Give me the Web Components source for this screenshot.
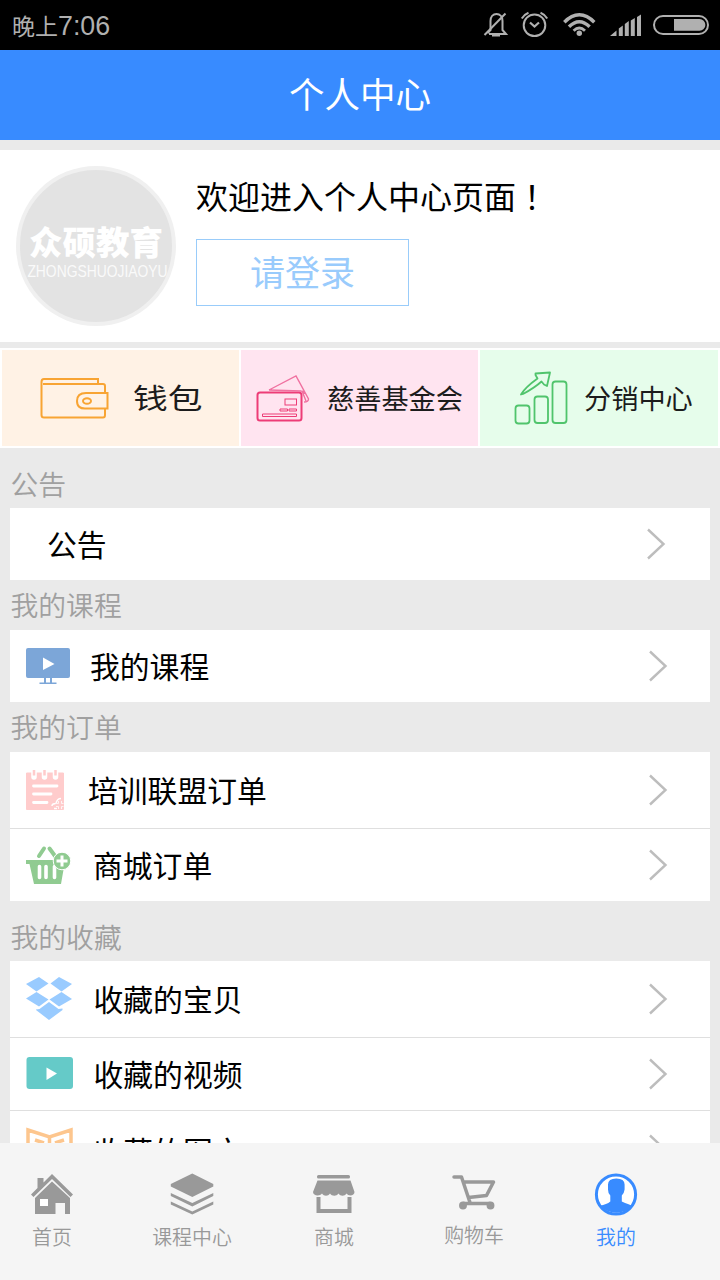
<!DOCTYPE html>
<html lang="zh-CN">
<head>
<meta charset="utf-8">
<title>个人中心</title>
<style>
html,body{margin:0;padding:0}
body{width:720px;height:1280px;overflow:hidden;background:#eaeaea;font-family:"Noto Sans CJK SC",sans-serif}
</style>
</head>
<body>
<user-center></user-center>
<script>
const define = (name, html, setup) => {
  const template = document.createElement('template');
  template.innerHTML = html;
  customElements.define(name, class extends HTMLElement {
    constructor() {
      super();
      this.attachShadow({mode: 'open'}).append(template.content.cloneNode(true));
    }
    connectedCallback() { if (setup) setup(this, this.shadowRoot); }
  });
};

define('status-bar', `
<style>
:host{display:flex;height:50px;flex:none;background:#000;color:#b0b0b0;align-items:center;justify-content:space-between;box-sizing:border-box;padding-left:12px}
.time{display:flex;align-items:baseline;font:26.800px/48px "Liberation Sans",sans-serif;white-space:nowrap}
.time b{font:400 23px/48px "Noto Sans CJK SC",sans-serif}
svg{display:block}
</style>
<div class="time"><b>晚上</b><span>7:06</span></div>
<svg width="240" height="50" viewBox="480 0 240 50" fill="none" stroke="#b0b0b0" stroke-width="2">
  <path d="M488.500 33.500V32l2-2V21c0-4 2.500-7 6-7s6 3 6 7v9l3.500 4H489"/><path d="M484.500 35L505.500 13.500"/><path d="M492 35.500h8" stroke-width="2"/>
  <circle cx="534.500" cy="25.300" r="10.800"/><path d="M530 22.500l4.500 4 4.500-4" stroke-width="2.200"/><path d="M521.800 18.500Q524 14.500 528.500 12.700M540.500 12.700Q545 14.500 547.200 18.500"/>
  <g stroke-width="3.400"><path d="M564.300 22.300Q571.500 14.800 579.300 14.800T594.300 22.300"/><path d="M569 26.800Q574 21.700 579.300 21.700T589.600 26.800"/><path d="M573.600 30.800Q576.500 28 579.300 28T585 30.800" stroke-width="2.800"/></g>
  <g fill="#b0b0b0" stroke="none"><circle cx="579.300" cy="33.300" r="2.700"/>
  <path d="M610 36l6.500-5.500V36zM618.800 28.500l4-3V36h-4zM624.800 24l4-3V36h-4zM630.800 20.500l4-2.500V36h-4zM637 17l4-2.500V36h-4z"/>
  <path d="M674 19h25.500a5.900 5.900 0 0 1 0 11.800H674z"/></g>
  <rect x="654" y="16" width="54" height="18" rx="9"/>
</svg>`);

define('title-bar', `
<style>:host{display:block;height:90px;flex:none;background:#388bff;color:#fff;text-align:center;font-size:35.500px;line-height:86px;font-weight:400}</style>
<slot></slot>`);

define('profile-card', `
<style>
:host{display:flex;height:192px;margin-top:10px;background:#fff;box-sizing:border-box;padding:16px 0 0 16px}
.avatar{width:160px;height:160px;box-sizing:border-box;border:4px solid #f0f0f0;border-radius:50%;background:#e3e3e3;color:#fff;display:flex;flex-direction:column;align-items:center;flex:none;padding-top:51px}
.cn{font-weight:900;font-size:33.500px;line-height:40px;height:42px;white-space:nowrap}
.en{font:17px/18px "Liberation Sans",sans-serif;white-space:nowrap;color:#fafafa;transform:translateX(1.500px) scaleX(.815)}
.side{padding-left:20px;display:flex;flex-direction:column;align-items:flex-start}
.welcome{font-size:32px;line-height:47px;height:73px;padding-top:6px;box-sizing:border-box;color:#000;white-space:nowrap}
.mark{font-family:"Noto Sans CJK TC",sans-serif}
button{all:unset;box-sizing:border-box;width:213px;height:67px;border:1px solid #99ccfa;text-align:center;color:#99cbfc;font-size:35px;line-height:61px;padding-bottom:4px;font-weight:400}
</style>
<div class="avatar"><span class="cn">众硕教育</span><span class="en">ZHONGSHUOJIAOYU</span></div>
<div class="side"><div class="welcome">欢迎进入个人中心页面<span class="mark" lang="zh-TW">！</span></div><button>请登录</button></div>`);

define('shortcut-tile', `
<style>
:host{display:flex;align-items:center;background:var(--tile);box-sizing:border-box;height:96px;overflow:hidden;font-size:28px;color:#1c1c1c;font-weight:400}
.text{white-space:nowrap;line-height:40px;margin-top:-3px;transform-origin:0 50%}
::slotted(svg){display:block;flex:none}
</style>
<slot name="icon"></slot><span class="text"><slot></slot></span>`, (el, root) => {
  const t = root.querySelector('.text');
  t.style.fontSize = (el.getAttribute('size') || 27.2) + 'px';
  t.style.transform = 'scaleX(' + (el.getAttribute('stretch') || 1) + ')';
});

define('menu-section', `
<style>
:host{display:block;padding:0 10px}
.label{height:var(--label-height,50px);line-height:var(--label-line,48px);font-size:27.800px;color:#a0a0a0;font-weight:350;white-space:nowrap;text-indent:.5px}
.rows{background:#fff}
</style>
<div class="label"></div><div class="rows"><slot></slot></div>`, (el, root) => {
  root.querySelector('.label').textContent = el.getAttribute('label');
});

define('menu-row', `
<style>
:host{display:flex;height:var(--h,72px);box-sizing:border-box;background:#fff;align-items:center;color:#000}
:host([divided]){border-bottom:1px solid #dfdfdf}
.icon{width:var(--text-x,80px);height:100%;display:flex;align-items:center;flex:none}
.text{flex:1;font-size:29.800px;line-height:44px;white-space:nowrap;padding-top:var(--text-top,0px);padding-bottom:3px}
.arrow{display:block;margin-right:var(--arrow-gap,42px)}
::slotted(svg){display:block}
</style>
<span class="icon"><slot name="icon"></slot></span><span class="text"><slot></slot></span>
<svg class="arrow" width="20" height="32" fill="none" stroke="#bdbdbd" stroke-width="2.400"><path d="M2 1.500L17.500 16 2 30.500"/></svg>`);

define('tab-item', `
<style>
:host{display:flex;flex-direction:column;align-items:center;color:#999;font-size:19.900px;font-weight:350;white-space:nowrap;padding-top:25px;box-sizing:border-box}
:host([active]){color:#388bff}
span{line-height:30px;margin-top:var(--drop,4px)}
::slotted(svg){display:block}
</style><slot name="icon"></slot><span><slot></slot></span>`);

define('tab-bar', `
<style>
:host{display:grid;grid-template-columns:104px 176px 108px 172px 112px;height:137px;flex:none;background:#f5f5f5}
</style>
<tab-item><svg slot="icon" width="44" height="50" viewBox="30 1168 44 50" fill="#999">
  <path d="M37.500 1178h6v4.500l8.500-8.500 21 20.500-2.500 2.500L52 1179l-18.500 18-2.500-2.500 6.500-6.500z"/><path d="M35 1198l17-16.500 18 16.500v16H65v-11h-9.500v11H35zM40 1199v7h8v-7z" fill-rule="evenodd"/><path d="M40 1199h8v7h-8z" fill="#fff"/></svg>首页</tab-item>
<tab-item><svg slot="icon" width="46" height="50" viewBox="169 1168 46 50" fill="#999">
  <path d="M192.300 1173.500l21 10.500v2.500l-21 10.500-21.500-10.500V1184z"/><path d="M170.800 1193l21.500 10 21-10v3l-21 10.500-21.500-10.500zM170.800 1201.500l21.500 10 21-10v3l-21 10-21.500-10z"/></svg>课程中心</tab-item>
<tab-item><svg slot="icon" width="44" height="50" viewBox="312 1168 44 50" fill="#999">
  <rect x="317" y="1175" width="33" height="3.500" rx="1.500"/><path d="M317.500 1180.500h33l4 11.500c0 4-6 4.500-8 1.500-2 3-6 3-8 0-2 3-6.500 3-8.500 0-2 3-6 3-8 0-2 3-9 2.500-9-1.500z"/><path d="M318.500 1197v14h31v-14" fill="none" stroke="#999" stroke-width="4"/></svg>商城</tab-item>
<tab-item style="--drop:2px"><svg slot="icon" width="46" height="50" viewBox="451 1168 46 50" fill="none" stroke="#999" stroke-width="3.500" stroke-linecap="round" stroke-linejoin="round">
  <path d="M454 1177h7.500l8.500 25.500M463.500 1182h30l-7 13.500-18 2M463 1203.500h27"/><circle cx="463" cy="1205.500" r="2.200" fill="#999"/><circle cx="490.500" cy="1205.500" r="2.200" fill="#999"/></svg>购物车</tab-item>
<tab-item active><svg slot="icon" width="44" height="50" viewBox="594 1168 44 50">
  <circle cx="616" cy="1194.500" r="19.600" fill="#fff" stroke="#388bff" stroke-width="3"/><path d="M608 1184.500q0-6 8.300-6t8.300 6v5q-.500 4-2.800 6v6q7 3 10.500 4.200-7 7-16 7t-16.500-7q7-1.200 10.500-4.200v-6q-2.300-2-2.300-6z" fill="#388bff"/></svg>我的</tab-item>`);

define('user-center', `
<style>
:host{display:flex;flex-direction:column;width:720px;height:1280px;background:#eaeaea}
main{flex:1;min-height:0;overflow:hidden}
.tiles{display:grid;grid-template-columns:237px 237px 238px;gap:2px;background:#fff;padding:2px;margin-top:6px;height:96px}
</style>
<status-bar></status-bar>
<title-bar>个人中心</title-bar>
<main>
<profile-card></profile-card>
<div class="tiles">
  <shortcut-tile style="--tile:#fff2e5" size="28.500" stretch="1.220"><svg slot="icon" width="131" height="96" viewBox="2 350 131 96" fill="none" stroke="#f8a433" stroke-width="2">
    <path d="M98 384v-5H44q-2.500 0-2.500 3v33q0 2.500 2.500 2.500h59q2 0 2-2.500v-6M105 392v-6q0-2-2-2H43M107.500 393H86q-9 0-9 8t9 7.500h21.500z"/><ellipse cx="87" cy="401" rx="4" ry="2.800"/></svg>钱包</shortcut-tile>
  <shortcut-tile style="--tile:#ffe4f0"><svg slot="icon" width="86" height="96" viewBox="241 350 86 96" fill="none" stroke="#ed3c77">
    <rect x="257.500" y="392.500" width="44" height="28" rx="2.500" stroke-width="2"/><path d="M269 390l27-14 12.500 23q0 3-4.500 3M269 390l32 1q3 0 3.500 3M302 391l4 10" stroke="#f071a0" stroke-width="1.400"/><rect x="285" y="399" width="11.500" height="6"/><path d="M280 409h7.500v2H280zM289 409h7.500v2H289zM262.500 414h34v2.500h-34z"/></svg>慈善基金会</shortcut-tile>
  <shortcut-tile style="--tile:#e6fdeb"><svg slot="icon" width="104" height="96" viewBox="480 350 104 96" fill="none" stroke="#50c46c" stroke-width="1.800">
    <rect x="515.500" y="405.500" width="14" height="18" rx="3"/><rect x="534.500" y="396.500" width="13.500" height="26.500" rx="3"/><rect x="552.500" y="381.500" width="14" height="41.500" rx="3"/><path d="M521 394.500q4-7 16.500-16l-2-3.500v-1.500l14.500-1-3 13.500-3-1.500-2.500-3q-6.500 6-18.500 12.500z" stroke-linejoin="round"/></svg>分销中心</shortcut-tile>
</div>
<menu-section label="公告" style="--label-height:60px;--label-line:70px">
  <menu-row style="--text-x:37px;--arrow-gap:44px">公告</menu-row>
</menu-section>
<menu-section label="我的课程">
  <menu-row><svg slot="icon" width="60" height="72" viewBox="10 630 60 72" fill="#7ca6d8">
    <path fill-rule="evenodd" d="M28 648h40q2 0 2 2v26q0 2-2 2H28q-2 0-2-2v-26q0-2 2-2zm15 9.500v12.500l11.500-6z"/><path d="M44 678h2v4.500h4V678h2v4.500h4.500v1.500h-17v-1.500H44z"/></svg>我的课程</menu-row>
</menu-section>
<menu-section label="我的订单">
  <menu-row divided style="--h:77px;--text-x:78px"><svg slot="icon" width="60" height="76" viewBox="10 752 60 76">
    <path d="M26.500 773h37v36.500h-37z" fill="#fcc" stroke="#fcc" stroke-linejoin="round"/><path d="M34 771v6M44.500 771v6M55.500 771v6" stroke="#fff" stroke-width="5.500" stroke-linecap="round"/><path d="M34 770v5.500M44.500 770v5.500M55.500 770v5.500" stroke="#fcc" stroke-width="2.500"/><path d="M33.500 786H57M33.500 794H51M33.500 802.500H47" stroke="#fff" stroke-width="2.800" stroke-linecap="round"/><path d="M52 806q0-2.500 4-2.500 1-5 5-5M54 808.500h3" fill="none" stroke="#fff" stroke-width="1.500"/><path d="M60 801v8M56 805h7.500" stroke="#fff" stroke-width="4"/><path d="M60 800v9.500M55.500 805h8.500" stroke="#fcc" stroke-width="2.400"/></svg>培训联盟订单</menu-row>
  <menu-row style="--text-x:83px"><svg slot="icon" width="61" height="72" viewBox="10 829 61 72">
    <path d="M26 860h40v4h-1.500l-3.500 20H34l-4.500-20H26z" fill="#90cb91"/><path d="M39 856l5-7.500M49.500 848.500l5.500 7.500" stroke="#90cb91" stroke-width="4" stroke-linecap="round"/><path d="M39.500 866.500v11M46 866.500v11M54.500 866.500v11" stroke="#fff" stroke-width="3.600" stroke-linecap="round"/><circle cx="62" cy="861" r="8.800" fill="#90cb91" stroke="#fff" stroke-width="1"/><path d="M62 855.500v11M56.500 861h11" stroke="#fff" stroke-width="3"/></svg>商城订单</menu-row>
</menu-section>
<menu-section label="我的收藏" style="--label-height:60px;--label-line:70px">
  <menu-row divided style="--h:77px;--text-x:83.500px"><svg slot="icon" width="62" height="76" viewBox="10 961 62 76" fill="#99cbff">
    <path d="M39 977l9.500 6.500-12 8-10.500-7.500zM59 977l13 7-10.500 7.500-11-8zM36.500 992l12 7.500-9.500 7-13-8zM61.500 992l10.500 7-13 7.500-9.500-7zM36 1009.500l3.500-.5 9.500-7 9.500 7 4-.5v1.500l-13.500 10-13-10z"/></svg>收藏的宝贝</menu-row>
  <menu-row divided style="--h:73px;--text-x:83.500px"><svg slot="icon" width="64" height="72" viewBox="10 1038 64 72">
    <rect x="26.500" y="1057" width="46.500" height="32" rx="3" fill="#65cac8"/><path d="M46.500 1067.500v12.500l10.500-6.500z" fill="#fff"/></svg>收藏的视频</menu-row>
  <menu-row style="--h:77px;--text-x:83.500px;--text-top:4px"><svg slot="icon" width="64" height="77" viewBox="10 1111 64 77" fill="none" stroke="#fdc68e" stroke-width="3.500">
    <path d="M28 1130l21.500 7 21.500-7v34l-21.500 7-21.500-7zM49.500 1137v34M35 1140l9 3M64 1140l-9 3M35 1149l9 3M64 1149l-9 3"/></svg>收藏的图文</menu-row>
</menu-section>
</main>
<tab-bar></tab-bar>`);
</script>
</body>
</html>
